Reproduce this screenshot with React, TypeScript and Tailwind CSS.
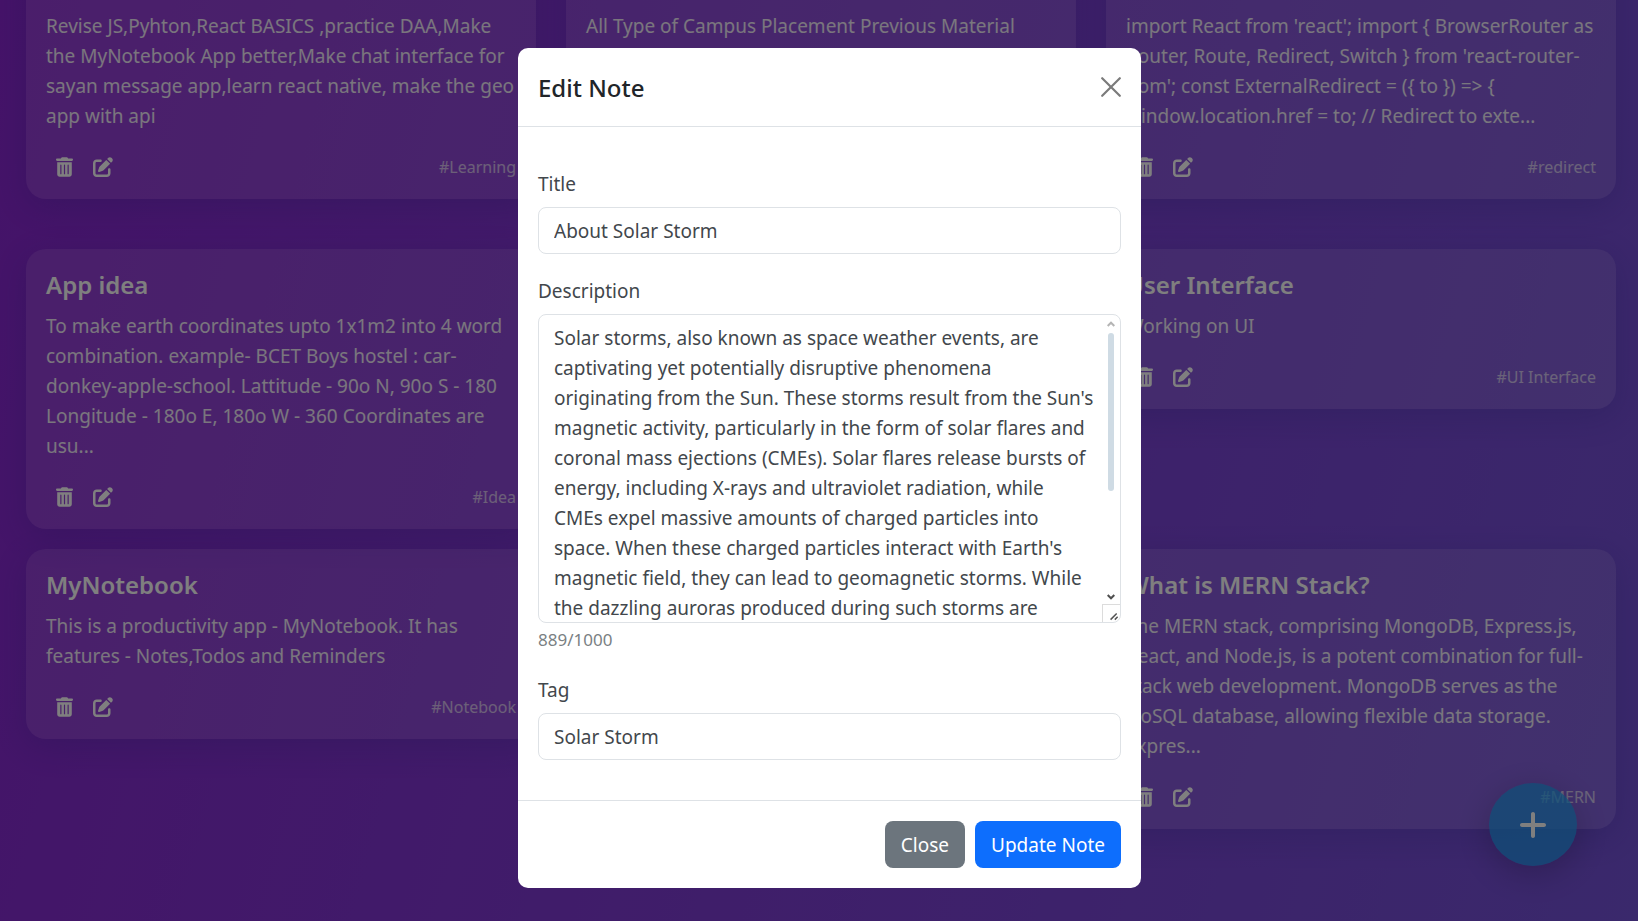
import { useState } from "react";
import { FaPenToSquare, FaPlus, FaTrashCan } from "react-icons/fa6";

type Note = { title: string; description: string; tag: string };

const notes: Note[] = [
  {
    title: "Works to do - Learning",
    description:
      "Revise JS,Pyhton,React BASICS ,practice DAA,Make the MyNotebook App better,Make chat interface for sayan message app,learn react native, make the geo app with api",
    tag: "Learning",
  },
  {
    title: "Google Agenda",
    description:
      "All Type of Campus Placement Previous Material Rounds, Important Topics, Common Lists and more. Aptitude tests, group discussions, technical interviews and the HR interview rounds of every company that visited the campus in...",
    tag: "Placement",
  },
  {
    title: "React Redirect",
    description:
      "import React from 'react'; import { BrowserRouter as Router, Route, Redirect, Switch } from 'react-router-dom'; const ExternalRedirect = ({ to }) => { window.location.href = to; // Redirect to exte...",
    tag: "redirect",
  },
  {
    title: "App idea",
    description:
      "To make earth coordinates upto 1x1m2 into 4 word combination. example- BCET Boys hostel : car-donkey-apple-school. Lattitude - 90o N, 90o S - 180 Longitude - 180o E, 180o W - 360 Coordinates are usu...",
    tag: "Idea",
  },
  {
    title: "About Solar Storm",
    description:
      "Solar storms, also known as space weather events, are captivating yet potentially disruptive phenomena originating from the Sun. These storms result from the Sun's magnetic activity, particularly in...",
    tag: "Solar Storm",
  },
  { title: "User Interface", description: "Working on UI", tag: "UI Interface" },
  {
    title: "MyNotebook",
    description: "This is a productivity app - MyNotebook. It has features - Notes,Todos and Reminders",
    tag: "Notebook",
  },
  { title: "Reminders", description: "Set reminders for the week", tag: "Reminder" },
  {
    title: "What is MERN Stack?",
    description:
      "The MERN stack, comprising MongoDB, Express.js, React, and Node.js, is a potent combination for full-stack web development. MongoDB serves as the NoSQL database, allowing flexible data storage. Expres...",
    tag: "MERN",
  },
];

const solarStorm = [
  "Solar storms, also known as space weather events, are",
  "captivating yet potentially disruptive phenomena",
  "originating from the Sun. These storms result from the Sun's",
  "magnetic activity, particularly in the form of solar flares and",
  "coronal mass ejections (CMEs). Solar flares release bursts of",
  "energy, including X-rays and ultraviolet radiation, while",
  "CMEs expel massive amounts of charged particles into",
  "space. When these charged particles interact with Earth's",
  "magnetic field, they can lead to geomagnetic storms. While",
  "the dazzling auroras produced during such storms are",
  "mesmerizing, they can also disrupt satellite communications,",
  "navigation systems and power grids.",
].join("\n");

function NoteCard({ note }: { note: Note }) {
  return (
    <article className="rounded-[20px] bg-white/10 px-5 pt-[21px] pb-[17px] text-white shadow-[0_8px_32px_rgba(31,38,135,0.2)]">
      <h2 className="mb-[11px] text-[24px] leading-[30px] font-semibold">{note.title}</h2>
      <p className="mb-[21px] text-[19px] leading-[30px] text-white/90">{note.description}</p>
      <div className="flex h-[30px] items-center justify-between">
        <div className="flex gap-5 px-2.5">
          <button type="button" aria-label={`Delete ${note.title}`}>
            <FaTrashCan className="h-5 w-[17px]" />
          </button>
          <button type="button" aria-label={`Edit ${note.title}`}>
            <FaPenToSquare className="size-5" />
          </button>
        </div>
        <span className="text-[16px] leading-[26px] text-white/65">#{note.tag}</span>
      </div>
    </article>
  );
}

function EditNoteDialog() {
  const [title, setTitle] = useState("About Solar Storm");
  const [description, setDescription] = useState(solarStorm);
  const [tag, setTag] = useState("Solar Storm");
  const field =
    "h-[47px] w-full rounded-lg border border-[#dee2e6] px-[15px] text-[19px] leading-[30px] text-[#42474c] outline-none";
  const label = "mb-2 block pt-0.5 text-[19px] leading-[30px] text-[#42474c]";

  return (
    <div
      role="dialog"
      aria-modal="true"
      aria-labelledby="dialog-title"
      className="w-full max-w-[623px] rounded-[10px] bg-white text-[#212529]"
    >
      <header className="flex items-center justify-between border-b border-[#dee2e6] p-5">
        <h1 id="dialog-title" className="pt-0.5 text-[24px] leading-[36px] font-medium">
          Edit Note
        </h1>
        <button type="button" aria-label="Close dialog" className="text-[#7b7b7b]">
          <svg viewBox="0 0 20 20" className="size-5" stroke="currentColor" strokeWidth="2.2" strokeLinecap="round">
            <path d="M1.2 1.2 18.8 18.8M18.8 1.2 1.2 18.8" />
          </svg>
        </button>
      </header>
      <form className="px-5 pt-10 pb-5">
        <div className="mb-5">
          <label htmlFor="title" className={label}>Title</label>
          <input id="title" className={field} value={title} onChange={(e) => setTitle(e.target.value)} />
        </div>
        <div className="mb-5">
          <label htmlFor="description" className={label}>Description</label>
          <div className="flex h-[309px] overflow-hidden rounded-lg border border-[#dee2e6]">
            <textarea
              id="description"
              className="min-w-0 flex-1 resize-none overflow-y-auto py-2 pl-[15px] text-[19px] leading-[30px] text-[#42474c] outline-none [scrollbar-width:none]"
              value={description}
              onChange={(e) => setDescription(e.target.value)}
            />
            <div aria-hidden="true" className="ml-1 flex w-[18px] flex-col items-center">
              <svg viewBox="0 0 8 6" className="mt-1.5 mb-1.5 h-1.5 w-2" fill="none" stroke="#b5b5b5" strokeWidth="2">
                <path d="M.7 5 4 1.7 7.3 5" />
              </svg>
              <div className="h-[158px] w-1.5 rounded-full bg-[#cfdbe4]" />
              <svg viewBox="0 0 8 6" className="mt-auto mb-1 h-1.5 w-2" fill="none" stroke="#505050" strokeWidth="2">
                <path d="M.7 1 4 4.3 7.3 1" />
              </svg>
              <svg viewBox="0 0 18 18" className="size-[18px] border-t border-l border-[#dcdcdc]" stroke="#555" strokeWidth="1.6">
                <path d="M8 15.5 14.5 9M12.5 15.5 15.5 12.5" />
              </svg>
            </div>
          </div>
          <p className="mt-1 text-[17px] leading-[26px] text-[#7a7f83]">889/1000</p>
        </div>
        <div className="mb-5">
          <label htmlFor="tag" className={label}>Tag</label>
          <input id="tag" className={field} value={tag} onChange={(e) => setTag(e.target.value)} />
        </div>
      </form>
      <footer className="flex justify-end gap-2.5 border-t border-[#dee2e6] p-5">
        <button type="button" className="h-[47px] rounded-lg bg-[#6c757d] px-4 text-[19px] leading-[30px] text-white">
          Close
        </button>
        <button type="button" className="h-[47px] rounded-lg bg-[#0d6efd] px-4 text-[19px] leading-[30px] text-white">
          Update Note
        </button>
      </footer>
    </div>
  );
}

export default function App() {
  return (
    <div className="h-screen overflow-hidden bg-linear-[105deg] from-[#8a26d2] to-[#7452d8] font-['Noto_Sans',sans-serif]">
      <main className="-mt-[51px] grid grid-cols-3 items-start gap-x-[30px] gap-y-5 pr-[22px] pl-[26px]">
        {notes.map((note) => (
          <NoteCard key={note.title} note={note} />
        ))}
      </main>
      <button
        type="button"
        aria-label="Add note"
        className="fixed right-[61px] bottom-[55px] flex h-[83px] w-[88px] items-center justify-center rounded-[50%] bg-[#18a0f0]/70 text-white shadow-[0_8px_32px_rgba(0,0,0,0.2)]"
      >
        <FaPlus className="size-8" />
      </button>
      <div className="fixed inset-0 flex items-start justify-center bg-black/50 pt-12 pl-[21px]">
        <EditNoteDialog />
      </div>
    </div>
  );
}
